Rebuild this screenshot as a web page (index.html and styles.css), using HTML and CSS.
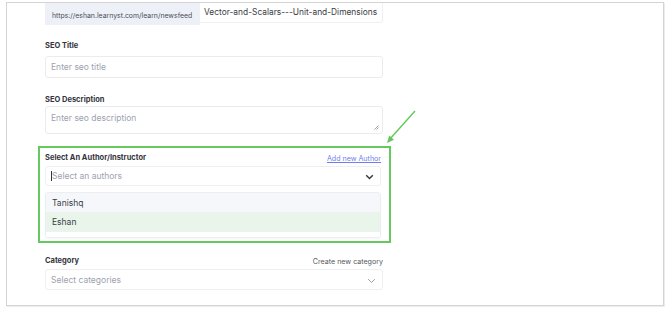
FILE: index.html
```html
<!DOCTYPE html>
<html>
<head>
<meta charset="utf-8">
<link rel="stylesheet" href="styles.css">
</head>
<body>
<div class="card">
  <div class="form">
    <div class="url-row">
      <div class="url-prefix">https://eshan.learnyst.com/learn/newsfeed</div>
      <div class="url-slug">Vector-and-Scalars---Unit-and-Dimensions</div>
    </div>

    <div class="field seo-title">
      <div class="label">SEO Title</div>
      <div class="input"><span class="ph">Enter seo title</span></div>
    </div>

    <div class="field seo-desc">
      <div class="label">SEO Description</div>
      <div class="textarea">
        <span class="ph">Enter seo description</span>
        <svg class="grip" width="6" height="6" viewBox="0 0 6 6"><path d="M5.5 1.5 L1.5 5.5 M5.5 3.5 L3.5 5.5" stroke="#8a8a8a" stroke-width="0.8"/></svg>
      </div>
    </div>

    <div class="highlight">
      <div class="label-row">
        <div class="label">Select An Author/Instructor</div>
        <a class="link">Add new Author</a>
      </div>
      <div class="select active">
        <span class="caret"></span><span class="ph">Select an authors</span>
        <svg class="chev" width="9" height="6" viewBox="0 0 9 6"><path d="M1.2 1.2 L4.5 4.5 L7.8 1.2" fill="none" stroke="#3a3a3a" stroke-width="1.5"/></svg>
      </div>
      <div class="menu">
        <div class="opt">Tanishq</div>
        <div class="opt sel">Eshan</div>
        <div class="opt more"></div>
      </div>
    </div>

    <div class="field category">
      <div class="label-row">
        <div class="label">Category</div>
        <span class="aside">Create new category</span>
      </div>
      <div class="select">
        <span class="ph">Select categories</span>
        <svg class="chev" width="9" height="6" viewBox="0 0 9 6"><path d="M1.2 1.2 L4.5 4.5 L7.8 1.2" fill="none" stroke="#9aa0a8" stroke-width="1"/></svg>
      </div>
    </div>
  </div>

  <svg class="arrow" width="34" height="36" viewBox="0 0 34 36">
    <path d="M31 1 L5 30" stroke="#63c75c" stroke-width="1.4" fill="none"/>
    <path d="M3 33 L5.2 25.5 L10 29.8 Z" fill="#63c75c"/>
  </svg>
</div>
</body>
</html>
```

FILE: styles.css
```css
* { box-sizing: border-box; }
html, body { margin: 0; padding: 0; background: #ffffff; }
body {
  font-family: Inter, "Noto Sans", sans-serif;
  color: #2d2f36;
  width: 670px;
  height: 309px;
  overflow: hidden;
}
.card {
  position: relative;
  margin: 2px 6px 0 6px;
  height: 304px;
  border: 1px solid #d4d4d4;
  box-shadow: 1px 1px 0 #ececec;
  background: #fff;
}
.form {
  width: 338px;
  margin-left: 38px;
  display: flex;
  flex-direction: column;
}
.url-row {
  display: flex;
  height: 22px;
}
.url-prefix {
  width: 155px;
  flex: none;
  background: #eef0f7;
  font-size: 6.9px;
  color: #4a4d57;
  display: flex;
  align-items: center;
  padding: 2px 0 0 7px;
  white-space: nowrap;
}
.url-slug {
  flex: 1;
  min-width: 0;
  border: 1px solid #f0f0f2;
  border-left: none;
  border-top: none;
  border-radius: 0 0 3px 0;
  font-size: 8.4px;
  color: #3a3c44;
  display: flex;
  align-items: center;
  padding: 0 0 2px 4px;
  height: 20px;
  white-space: nowrap;
  overflow: hidden;
}
.label {
  font-size: 7.5px;
  font-weight: 700;
  color: #33353c;
  line-height: 10px;
}
.field, .highlight { display: flex; flex-direction: column; }
.seo-title { margin-top: 16px; }
.seo-desc { margin-top: 17px; }
.input {
  margin-top: 5px;
  height: 22px;
  border: 1px solid #ececef;
  border-radius: 3px;
  display: flex;
  align-items: center;
  padding-left: 5px;
}
.ph { font-size: 8.5px; color: #9ea2af; }
.textarea {
  position: relative;
  margin-top: 1px;
  height: 28px;
  border: 1px solid #ececef;
  border-radius: 3px;
  padding: 2px 0 0 5px;
  line-height: 12px;
}
.grip { position: absolute; right: 3px; bottom: 3px; }
.highlight {
  margin: 12px -8px 0 -7px;
  border: 2px solid #66c95f;
  padding: 5px 8px 3px 5px;
}
.label-row {
  display: flex;
  justify-content: space-between;
  align-items: center;
  height: 10px;
}
.link {
  font-size: 7.1px;
  color: #6f7ef2;
  text-decoration: underline;
}
.aside { font-size: 7.1px; color: #555862; }
.select {
  position: relative;
  margin-top: 3px;
  height: 20px;
  border: 1px solid #efeff2;
  border-radius: 3px;
  display: flex;
  align-items: center;
  padding-left: 5px;
}
.caret {
  width: 1px;
  height: 10px;
  background: #333;
}
.chev { position: absolute; right: 6px; top: 7px; }
.menu {
  margin-top: 6px;
  border: 1px solid #eceef2;
  border-radius: 3px;
  overflow: hidden;
  box-shadow: 0 1px 2px rgba(0,0,0,0.04);
  background: #fff;
}
.opt {
  height: 19px;
  display: flex;
  align-items: center;
  padding-left: 6px;
  font-size: 8.5px;
  color: #3b3e47;
  background: #f6f7fb;
}
.opt.sel { background: #e9f4ea; }
.opt.more { height: 6px; background: #fff; border-top: 1px solid #f0f1f4; }
.category { margin-top: 13px; }
.category .select { margin-top: 3px; height: 21px; }
.category .chev { top: 8px; }
.arrow { position: absolute; left: 377px; top: 107px; }
```
